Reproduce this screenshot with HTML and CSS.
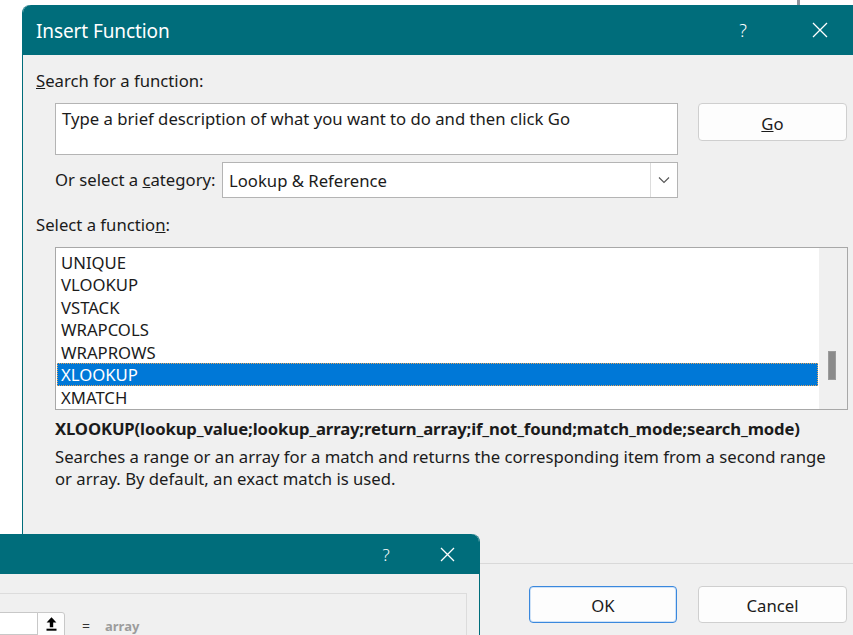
FILE: index.html
```html
<!DOCTYPE html>
<html lang="en">
<head>
<meta charset="utf-8">
<title>Insert Function</title>
<link rel="stylesheet" href="styles.css">
</head>
<body>
<div class="desk">
  <div class="bg-rule"></div>

  <section class="win win-main">
    <header class="titlebar">
      <span class="title">Insert Function</span>
      <span class="tb-btn tb-help">?</span>
      <span class="tb-btn tb-close">
        <svg width="16" height="16" viewBox="0 0 16 16"><path d="M1 1 L15 15 M15 1 L1 15" stroke="#fff" stroke-width="1.3" fill="none"/></svg>
      </span>
    </header>
    <div class="win-body">
      <div class="lbl"><u>S</u>earch for a function:</div>
      <div class="search-row">
        <div class="textbox">Type a brief description of what you want to do and then click Go</div>
        <button class="btn go"><u>G</u>o</button>
      </div>
      <div class="cat-row">
        <span class="cat-lbl">Or select a <u>c</u>ategory:</span>
        <div class="combo">
          <span class="combo-val">Lookup &amp; Reference</span>
          <span class="combo-btn">
            <svg width="12" height="8" viewBox="0 0 12 8"><path d="M1 1.5 L6 6.5 L11 1.5" stroke="#555" stroke-width="1.1" fill="none"/></svg>
          </span>
        </div>
      </div>
      <div class="lbl lbl-fn">Select a functio<u>n</u>:</div>
      <div class="listbox">
        <ul class="items">
          <li>UNIQUE</li>
          <li>VLOOKUP</li>
          <li>VSTACK</li>
          <li>WRAPCOLS</li>
          <li>WRAPROWS</li>
          <li class="sel">XLOOKUP</li>
          <li>XMATCH</li>
        </ul>
        <div class="vscroll"><div class="thumb"></div></div>
      </div>
      <p class="signature">XLOOKUP(lookup_value;lookup_array;return_array;if_not_found;match_mode;search_mode)</p>
      <p class="desc">Searches a range or an array for a match and returns the corresponding item from a second range<br>or array. By default, an exact match is used.</p>
      <hr class="sep">
      <div class="actions">
        <button class="btn ok">OK</button>
        <button class="btn cancel">Cancel</button>
      </div>
    </div>
  </section>

  <section class="win win-args">
    <header class="titlebar">
      <span class="tb-btn tb-help">?</span>
      <span class="tb-btn tb-close">
        <svg width="15" height="15" viewBox="0 0 15 15"><path d="M1 1 L14 14 M14 1 L1 14" stroke="#fff" stroke-width="1.3" fill="none"/></svg>
      </span>
    </header>
    <div class="win-body">
      <div class="groupbox">
        <div class="arg-row">
          <div class="arg-input"></div>
          <span class="ref-btn">
            <svg width="11" height="14" viewBox="0 0 11 14"><path d="M5.5 0.3 L0.6 5.6 H3.8 V10.2 H7.2 V5.6 H10.4 Z" fill="#000"/><rect x="0.5" y="11.7" width="10" height="2" fill="#000"/></svg>
          </span>
          <span class="eq">=</span>
          <span class="arg-val">array</span>
        </div>
      </div>
    </div>
  </section>
</div>
</body>
</html>
```

FILE: styles.css
```css
* { box-sizing: border-box; }

html, body {
  margin: 0;
  height: 100%;
}

body {
  background: #ffffff;
  overflow: hidden;
  font-family: "Noto Sans", "Open Sans", sans-serif;
  font-size: 16.7px;
  color: #1b1b1b;
}

.desk {
  position: relative;
  width: 853px;
  height: 635px;
  overflow: hidden;
}

/* edge of the sheet window peeking above the dialog */
.bg-rule {
  position: absolute;
  left: 797px;
  top: 0;
  width: 3px;
  height: 7px;
  background: #8e949c;
}

/* ---------- dialog windows ---------- */
.win {
  position: absolute;
  background: #f0f0f0;
  border: 1px solid #006d7b;
  border-top: none;
  border-radius: 8px 8px 0 0;
}

.win-main {
  left: 22px;
  top: 5px;
  width: 850px;
  height: 720px;
}

.win-args {
  left: -400px;
  top: 534px;
  width: 880px;
  height: 200px;
}

.titlebar {
  display: flex;
  align-items: center;
  background: #006d7b;
  color: #ffffff;
  border-radius: 8px 8px 0 0;
}

.win-main .titlebar {
  height: 50px;
  padding: 0 28px 0 13px;
}

.win-args .titlebar {
  height: 40px;
  padding: 0 9px 0 0;
}

.title {
  font-size: 19px;
  letter-spacing: -0.1px;
  padding-top: 2px;
}

.tb-btn {
  width: 46px;
  display: flex;
  justify-content: center;
  align-items: center;
  font-size: 18px;
  font-weight: 300;
}

.tb-help {
  margin-left: auto;
}

.win-main .tb-close { margin-left: 31px; }
.win-args .tb-close { margin-left: 15px; }
.win-args .tb-btn { font-size: 17px; }

/* ---------- main dialog body ---------- */
.win-main .win-body {
  padding: 14px 0 0 13px;
}

.lbl {
  line-height: 24px;
}

.lbl-fn {
  margin-top: 15px;
}

.search-row {
  display: flex;
  align-items: flex-start;
  gap: 20px;
  margin-top: 10px;
  padding-left: 19px;
}

.textbox {
  width: 623px;
  height: 52px;
  background: #ffffff;
  border: 1px solid #b4b4b4;
  padding: 4px 6px 0;
  line-height: 22px;
}

.btn {
  font: inherit;
  color: #1b1b1b;
  background: #fdfdfd;
  border: 1px solid #cfcfcf;
  border-radius: 4px;
  padding: 2px 0 0;
}

.go {
  width: 149px;
  height: 38px;
}

.cat-row {
  display: flex;
  align-items: center;
  margin-top: 7px;
  padding-left: 19px;
}

.cat-lbl {
  width: 167px;
  line-height: 22px;
  white-space: nowrap;
}

.combo {
  width: 456px;
  height: 36px;
  display: flex;
  align-items: center;
  background: #ffffff;
  border: 1px solid #b4b4b4;
}

.combo-val {
  flex: 1;
  padding-left: 6px;
}

.combo-btn {
  width: 27px;
  height: 100%;
  display: flex;
  justify-content: center;
  align-items: center;
  border-left: 1px solid #dcdcdc;
}

.listbox {
  display: flex;
  width: 793px;
  height: 163px;
  margin: 10px 0 0 19px;
  background: #ffffff;
  border: 1px solid #a8a8a8;
}

.items {
  flex: 1;
  margin: 0;
  padding: 2.5px 1px 0;
  list-style: none;
}

.items li {
  height: 22.5px;
  line-height: 20.5px;
  padding: 1px 0 0 3px;
  border: 1px solid transparent;
}

.items li.sel {
  background: #0078d7;
  color: #ffffff;
  border: 1px dotted #e3a35a;
}

.vscroll {
  width: 28px;
  background: #f0f0f0;
  padding: 103px 0 0 9px;
}

.thumb {
  width: 8px;
  height: 29px;
  background: #8b8b8b;
  border: 1px solid #9c9c9c;
}

.signature {
  margin: 7px 0 0 19px;
  line-height: 24px;
  font-weight: 700;
  white-space: nowrap;
  letter-spacing: -0.15px;
}

.desc {
  margin: 5px 0 0 19px;
  line-height: 22px;
  white-space: nowrap;
}

.sep {
  margin: 73px 0 0 -13px;
  border: none;
  height: 1px;
  background: #d9d9d9;
}

.actions {
  display: flex;
  gap: 21px;
  margin-top: 22px;
  padding-left: 493px;
}

.ok {
  width: 148px;
  height: 37px;
  border-color: #3a88dd;
  box-shadow: inset 0 0 0 1px #cfe2f7;
}

.cancel {
  width: 149px;
  height: 37px;
}

/* ---------- argument dialog ---------- */
.win-args .win-body {
  padding: 19px 12px 0 12px;
}

.groupbox {
  height: 120px;
  border: 1px solid #dcdcdc;
  padding: 18px 0 0 124px;
}

.arg-row {
  display: flex;
  align-items: flex-start;
}

.arg-input {
  width: 300px;
  height: 23px;
  background: #ffffff;
  border: 1px solid #c8c8c8;
}

.ref-btn {
  width: 28px;
  height: 24px;
  margin-left: -1px;
  display: flex;
  justify-content: center;
  align-items: center;
  background: #fdfdfd;
  border: 1px solid #c8c8c8;
  border-radius: 0 3px 0 0;
}

.eq {
  margin-left: 17px;
  font-size: 14px;
  line-height: 28px;
  color: #333;
}

.arg-val {
  margin-left: 15px;
  font-size: 13px;
  line-height: 28px;
  font-weight: 700;
  color: #9c9c9c;
}
```
